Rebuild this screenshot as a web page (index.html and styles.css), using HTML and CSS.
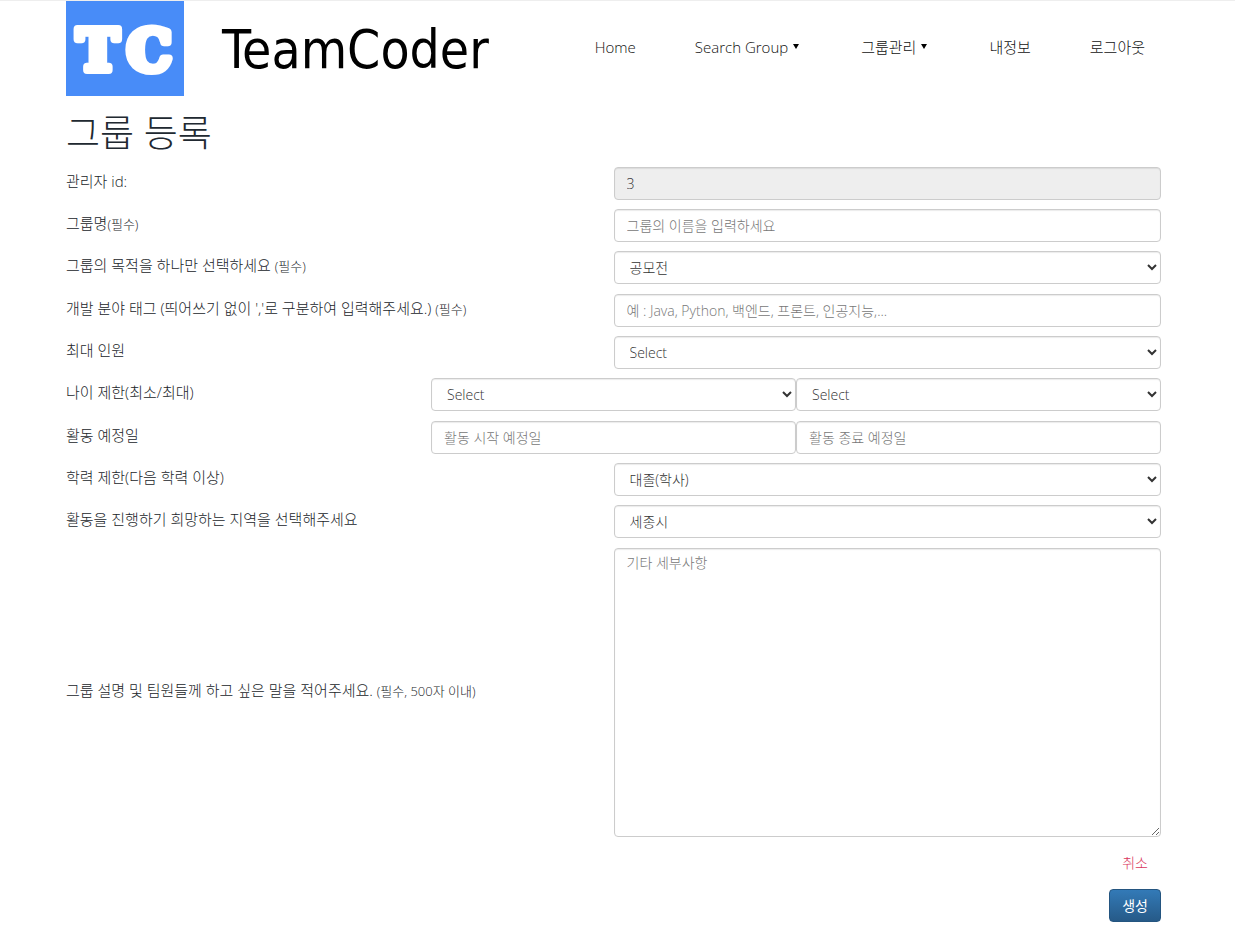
FILE: index.html
```html
<!DOCTYPE html>
<html lang="ko">
<head>
<meta charset="utf-8">
<title>TeamCoder</title>
<meta name="viewport" content="width=device-width, initial-scale=1">
<link rel="stylesheet" href="styles.css">
</head>
<body>
<header class="site-header">
  <a class="brand" href="#" aria-label="TeamCoder">
    <svg class="brand-mark" viewBox="0 0 118 95" aria-hidden="true">
      <rect width="118" height="95" fill="#488cf8"/>
      <text class="mark-letter" x="11" y="69">T</text>
      <text class="mark-letter" x="61" y="69">C</text>
    </svg>
    <span class="brand-name">TeamCoder</span>
  </a>
  <nav class="menu">
    <a class="menu-link" href="#">Home</a>
    <a class="menu-link has-menu" href="#">Search Group<span class="caret"></span></a>
    <a class="menu-link has-menu" href="#">그룹관리<span class="caret"></span></a>
    <a class="menu-link" href="#">내정보</a>
    <a class="menu-link" href="#">로그아웃</a>
  </nav>
</header>
<main class="page">
  <h1 class="title">그룹 등록</h1>
  <form class="form">
    <div class="group">
      <div class="row">
        <label class="label" for="manager">관리자 id:</label>
        <input class="control" id="manager" type="text" value="3" readonly>
      </div>
      <div class="row">
        <label class="label" for="name">그룹명<small class="note">(필수)</small></label>
        <input class="control" id="name" type="text" placeholder="그룹의 이름을 입력하세요">
      </div>
      <div class="row">
        <label class="label" for="purpose">그룹의 목적을 하나만 선택하세요 <small class="note">(필수)</small></label>
        <select class="control" id="purpose"><option>공모전</option></select>
      </div>
    </div>
    <div class="group">
      <div class="row">
        <label class="label" for="tags">개발 분야 태그 (띄어쓰기 없이 ','로 구분하여 입력해주세요.) <small class="note">(필수)</small></label>
        <input class="control" id="tags" type="text" placeholder="예 : Java, Python, 백엔드, 프론트, 인공지능,...">
      </div>
      <div class="row">
        <label class="label" for="max">최대 인원</label>
        <select class="control" id="max"><option>Select</option></select>
      </div>
      <div class="row row-thirds">
        <label class="label" for="age-min">나이 제한(최소/최대)</label>
        <select class="control" id="age-min"><option>Select</option></select>
        <select class="control" id="age-max" aria-label="최대 나이"><option>Select</option></select>
      </div>
    </div>
    <div class="group">
      <div class="row row-thirds">
        <label class="label" for="start">활동 예정일</label>
        <input class="control" id="start" type="text" placeholder="활동 시작 예정일">
        <input class="control" id="end" type="text" placeholder="활동 종료 예정일" aria-label="활동 종료 예정일">
      </div>
      <div class="row">
        <label class="label" for="education">학력 제한(다음 학력 이상)</label>
        <select class="control" id="education"><option>대졸(학사)</option></select>
      </div>
      <div class="row">
        <label class="label" for="region">활동을 진행하기 희망하는 지역을 선택해주세요</label>
        <select class="control" id="region"><option>세종시</option></select>
      </div>
    </div>
    <div class="row row-middle">
      <label class="label" for="detail">그룹 설명 및 팀원들께 하고 싶은 말을 적어주세요. <small class="note">(필수, 500자 이내)</small></label>
      <textarea class="control control-area" id="detail" placeholder="기타 세부사항"></textarea>
    </div>
    <div class="actions">
      <a class="button button-link" href="#">취소</a>
      <button class="button button-primary" type="submit">생성</button>
    </div>
  </form>
</main>
</body>
</html>
```

FILE: styles.css
```css
* {
  box-sizing: border-box;
}

body {
  margin: 0;
  border-top: 1px solid #eee;
  background: #fff;
  color: #212529;
  font-family: "Open Sans", "Noto Sans CJK KR", sans-serif;
  font-size: 15px;
  font-weight: 300;
  line-height: 20px;
}

.site-header {
  display: flex;
  justify-content: space-between;
  padding: 0 90px 0 66px;
}

.brand {
  display: flex;
  align-items: center;
  gap: 38px;
  color: #000;
  text-decoration: none;
}

.brand-mark {
  display: block;
  width: 118px;
  height: 95px;
}

.mark-letter {
  fill: #fff;
  stroke: #fff;
  stroke-width: 8px;
  stroke-linejoin: round;
  font-family: "DejaVu Serif", serif;
  font-size: 56px;
  font-weight: 700;
}

.brand-name {
  padding-top: 2px;
  font-family: "DejaVu Sans Condensed", "DejaVu Sans", sans-serif;
  font-size: 53px;
  font-weight: 400;
  line-height: 93px;
}

.menu {
  display: flex;
  align-items: center;
  gap: 59px;
  padding-bottom: 4px;
}

.menu-link {
  color: #111;
  text-decoration: none;
  white-space: nowrap;
}

.has-menu {
  display: flex;
  align-items: center;
  gap: 5px;
  padding-right: 3px;
}

.caret {
  border: 3px solid transparent;
  border-top: 5px solid #000;
  border-bottom: 0;
}

.page {
  padding: 0 74px 0 66px;
}

.title {
  margin: 17px 0 14px;
  color: #212931;
  font-size: 37px;
  font-weight: 300;
  line-height: 40px;
}

.form {
  display: flex;
  flex-direction: column;
  gap: 10px;
}

.group {
  display: flex;
  flex-direction: column;
  gap: 9px;
}

.row {
  display: grid;
  grid-template-columns: 1fr 1fr;
}

.row-thirds {
  grid-template-columns: 1fr 1fr 1fr;
}

.label {
  padding: 4px 0;
}

.row-middle {
  align-items: center;
}

.row-middle .label {
  padding-bottom: 10px;
}

.note {
  font-size: 13px;
  line-height: 16px;
}

.control {
  width: 100%;
  height: 33px;
  margin: 0;
  padding: 4px 12px;
  border: 1px solid #ccc;
  border-radius: 4px;
  background-color: #fff;
  box-shadow: inset 0 1px 1px rgba(0, 0, 0, 0.08);
  color: #333;
  font: inherit;
  font-size: 14px;
}

select.control {
  padding: 4px 0 4px 11px;
}

.control[readonly] {
  background-color: #eee;
}

.control::placeholder {
  color: #777;
  opacity: 1;
}

.control-area {
  display: block;
  height: 289px;
}

.actions {
  display: flex;
  flex-direction: column;
  align-items: flex-end;
  gap: 9px;
}

.button {
  height: 33px;
  padding: 5px 12px;
  border: 1px solid transparent;
  border-radius: 4px;
  font: inherit;
  font-size: 14px;
  font-weight: 400;
  text-decoration: none;
}

.button-link {
  color: #d9365c;
  font-weight: 300;
}

.button-primary {
  border-color: #245580;
  background: linear-gradient(#337ab7, #265a88);
  color: #fff;
}
```
